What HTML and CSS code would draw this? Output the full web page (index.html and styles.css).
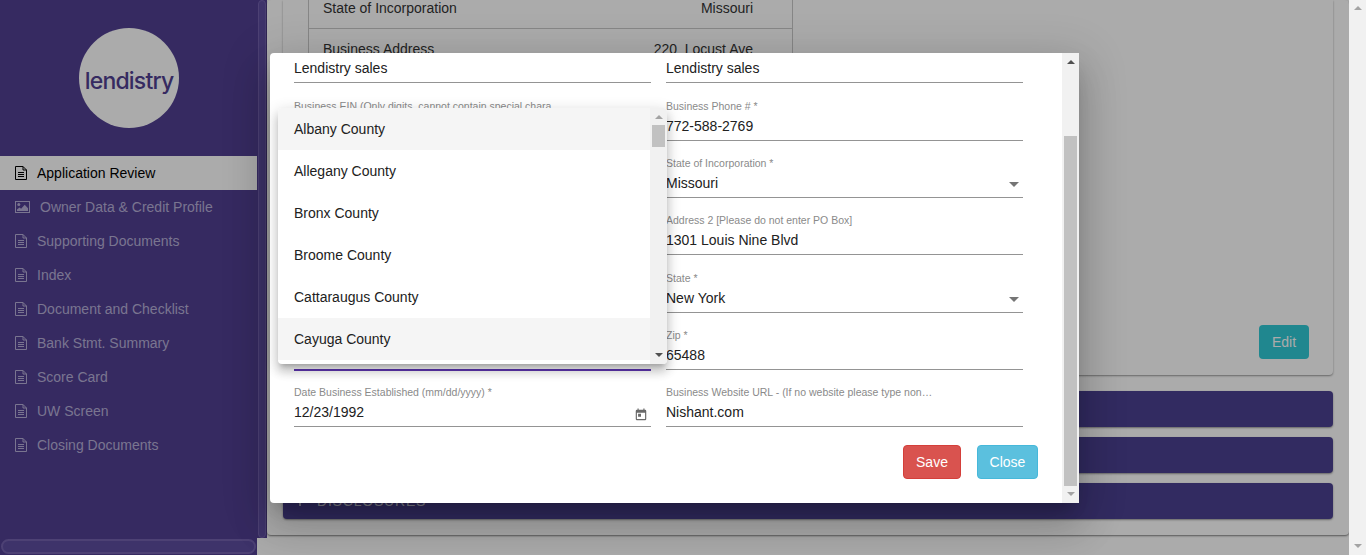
FILE: index.html
```html
<!DOCTYPE html>
<html lang="en">
<head>
  <meta charset="UTF-8" />
  <title>Application Review</title>
  <link rel="stylesheet" href="styles.css">
</head>
<body>
  <svg class="icon-defs" width="0" height="0">
    <symbol id="doc" viewBox="0 0 12 14">
      <path d="M.5.5h7.5l3.5 3.5v9.5H.5z M8 .5V4h3.5" fill="none" stroke="currentColor" />
      <path d="M3 6.5h6M3 8.5h6M3 10.5h6" fill="none" stroke="currentColor" />
    </symbol>
    <symbol id="pic" viewBox="0 0 15 12">
      <path fill="currentColor" fill-rule="evenodd" d="M0 0h15v12H0z M1 1v10h13V1z" />
      <circle cx="3.8" cy="3.6" r="1.5" fill="currentColor" />
      <path fill="currentColor" d="M2 10V8.4l2.5-2 1.6 1.4 3.6-4 3.3 3.4V10z" />
    </symbol>
  </svg>

  <div class="page">
    <aside class="sidebar">
      <div class="side-main">
        <div class="logo"><span class="logo-text">lendistry</span></div>
        <nav class="nav">
          <a class="nav-item active"><svg class="nav-icon"><use href="#doc" /></svg>Application Review</a>
          <a class="nav-item wide"><svg class="nav-icon pic"><use href="#pic" /></svg>Owner Data &amp; Credit Profile</a>
          <a class="nav-item"><svg class="nav-icon"><use href="#doc" /></svg>Supporting Documents</a>
          <a class="nav-item"><svg class="nav-icon"><use href="#doc" /></svg>Index</a>
          <a class="nav-item"><svg class="nav-icon"><use href="#doc" /></svg>Document and Checklist</a>
          <a class="nav-item"><svg class="nav-icon"><use href="#doc" /></svg>Bank Stmt. Summary</a>
          <a class="nav-item"><svg class="nav-icon"><use href="#doc" /></svg>Score Card</a>
          <a class="nav-item"><svg class="nav-icon"><use href="#doc" /></svg>UW Screen</a>
          <a class="nav-item"><svg class="nav-icon"><use href="#doc" /></svg>Closing Documents</a>
        </nav>
      </div>
      <div class="side-vbar"><div class="side-vthumb"></div></div>
      <div class="side-hbar"><div class="side-hthumb"></div></div>
    </aside>

    <main class="main">
      <div class="panel">
        <section class="card">
          <div class="info-table">
            <div class="info-row first"><span>State of Incorporation</span><span>Missouri</span></div>
            <div class="info-row"><span>Business Address</span><span>220&nbsp; Locust Ave</span></div>
          </div>
          <button class="btn-edit" type="button">Edit</button>
        </section>
        <div class="bar"></div>
        <div class="bar"></div>
        <div class="bar"><svg class="bar-icon" viewBox="0 0 12 12"><path d="M5 0h2v5h5v2H7v5H5V7H0V5h5z" fill="currentColor" /></svg>DISCLOSURES</div>
      </div>
    </main>

    <div class="win-scroll"><i class="arrow up faded"></i><i class="arrow down faded"></i></div>
  </div>

  <div class="overlay"></div>

  <div class="modal">
    <div class="modal-content">
      <div class="form-area">
        <form class="form-grid">
          <div class="field"><div class="value">Lendistry sales</div></div>
          <div class="field"><div class="value">Lendistry sales</div></div>

          <div class="field"><label>Business EIN (Only digits, cannot contain special chara</label><div class="value"></div></div>
          <div class="field"><label>Business Phone # *</label><div class="value">772-588-2769</div></div>

          <div class="field"><div class="value"></div></div>
          <div class="field select"><label>State of Incorporation *</label><div class="value">Missouri</div></div>

          <div class="field"><div class="value"></div></div>
          <div class="field"><label>Address 2 [Please do not enter PO Box]</label><div class="value">1301 Louis Nine Blvd</div></div>

          <div class="field"><div class="value"></div></div>
          <div class="field select"><label>State *</label><div class="value">New York</div></div>

          <div class="field focused"><div class="value"></div></div>
          <div class="field"><label>Zip *</label><div class="value">65488</div></div>

          <div class="field date">
            <label>Date Business Established (mm/dd/yyyy) *</label>
            <div class="value">12/23/1992</div>
            <svg class="cal-icon" viewBox="0 0 24 24"><path fill="currentColor" d="M19 3h-1V1h-2v2H8V1H6v2H5a2 2 0 0 0-2 2v14a2 2 0 0 0 2 2h14a2 2 0 0 0 2-2V5a2 2 0 0 0-2-2zm0 16H5V8h14zM7 10h5v5H7z" /></svg>
          </div>
          <div class="field"><label>Business Website URL - (If no website please type non…</label><div class="value">Nishant.com</div></div>
        </form>
      </div>
      <div class="modal-footer">
        <button class="btn btn-save" type="button">Save</button>
        <button class="btn btn-close" type="button">Close</button>
      </div>
    </div>
    <div class="modal-scroll">
      <i class="arrow up"></i>
      <div class="modal-thumb"></div>
      <i class="arrow down faded"></i>
    </div>
  </div>

  <div class="menu">
    <ul class="menu-list">
      <li class="hover">Albany County</li>
      <li>Allegany County</li>
      <li>Bronx County</li>
      <li>Broome County</li>
      <li>Cattaraugus County</li>
      <li class="hover">Cayuga County</li>
    </ul>
    <div class="menu-scroll">
      <i class="arrow up faded"></i>
      <div class="menu-thumb"></div>
      <i class="arrow down"></i>
    </div>
  </div>
</body>
</html>
```

FILE: styles.css
```css
* { box-sizing: border-box; }
html, body { margin: 0; height: 100%; overflow: hidden; }
body { font-family: "Liberation Sans", Arial, sans-serif; font-size: 14px; color: #333; background: #fff; }
.icon-defs { position: absolute; }

.page { display: flex; height: 555px; }

/* sidebar */
.sidebar { width: 267px; flex: none; display: grid; grid-template-columns: 257px 10px; grid-template-rows: 538px 17px; }
.side-main { background: #513f91; overflow: hidden; }
.logo { width: 100px; height: 100px; margin: 28px 0 0 79px; padding-top: 6px; border-radius: 50%; background: #fff; display: flex; align-items: center; justify-content: center; }
.logo-text { font-family: Inter, sans-serif; font-weight: 500; font-size: 23px; letter-spacing: -.8px; color: #513f91; }
.nav { margin-top: 28px; }
.nav-item { display: flex; align-items: center; height: 34px; padding-left: 15px; color: #b6afd7; white-space: nowrap; }
.nav-item.active { background: #fff; color: #000; }
.nav-icon { width: 12px; height: 14px; margin-right: 10px; flex: none; }
.nav-icon.pic { width: 15px; height: 12px; }
.side-vbar { background: #513f91; padding: 0 1px; }
.side-vthumb { height: 100%; background: #5d4c9f; border: 1px solid #7362ae; border-radius: 6px; }
.side-hbar { background: #513f91; padding: 1px; }
.side-hthumb { height: 100%; background: #5d4c9f; border: 2px solid #7362ae; border-radius: 8px; }

/* page behind the dialog */
.main { flex: 1; height: 555px; padding-bottom: 20px; }
.panel { height: 100%; padding: 0 16px 16px; display: flex; flex-direction: column; gap: 10px; border-radius: 4px; box-shadow: 0 1px 2px rgba(0, 0, 0, .5); }
.card { flex: 1; position: relative; margin-bottom: 6px; border-radius: 0 0 4px 4px; box-shadow: 0 1px 2px rgba(0, 0, 0, .4); padding-left: 25px; }
.info-table { width: 485px; border: 1px solid #c8c8c8; border-top: 0; }
.info-row { display: flex; justify-content: space-between; padding: 12px 39px 11px 14px; line-height: 16px; border-bottom: 1px solid #c8c8c8; }
.info-row.first { padding: 0 39px 12px 14px; }
.btn-edit { position: absolute; right: 24px; bottom: 16px; width: 50px; height: 34px; border: 0; border-radius: 4px; background: #30c9d5; color: #fff; font: inherit; }
.bar { height: 36px; flex: none; border-radius: 4px; background: #4b4191; color: #c9c9d9; box-shadow: 0 1px 2px rgba(0, 0, 0, .4); display: flex; align-items: center; padding-left: 12px; letter-spacing: .8px; }
.bar-icon { width: 10px; height: 10px; margin-right: 12px; }

.win-scroll { width: 17px; flex: none; background: #f1f1f1; display: flex; flex-direction: column; justify-content: space-between; align-items: center; padding: 6px 0 7px; }

/* scrollbar arrows */
.arrow { display: block; width: 0; height: 0; border-left: 4px solid transparent; border-right: 4px solid transparent; }
.arrow.up { border-bottom: 4px solid #505050; }
.arrow.down { border-top: 4px solid #505050; }
.arrow.up.faded { border-bottom-color: #a3a3a3; }
.arrow.down.faded { border-top-color: #a3a3a3; }

.overlay { position: absolute; top: 0; left: 0; width: 1349px; height: 555px; background: rgba(0, 0, 0, .33); }

/* dialog */
.modal { position: absolute; left: 270px; top: 53px; width: 809px; height: 450px; display: flex; background: #fff; border-radius: 4px 0 0 4px; box-shadow: 0 11px 15px -7px rgba(0, 0, 0, .2), 0 24px 38px 3px rgba(0, 0, 0, .14), 0 9px 46px 8px rgba(0, 0, 0, .12); }
.modal-content { flex: 1; display: flex; flex-direction: column; min-width: 0; }
.form-area { height: 374px; padding: 0 39px 0 24px; overflow: hidden; display: flex; flex-direction: column; justify-content: flex-end; }
.form-grid { display: grid; grid-template-columns: 357px 357px; grid-template-rows: 30px 58px 57px 57px 58px 57px 57px; column-gap: 15px; flex: none; }
.field { position: relative; display: flex; flex-direction: column; justify-content: flex-end; }
.field label { display: block; height: 12px; margin-bottom: 6px; font-size: 10.5px; line-height: 12px; color: #8a8a8a; white-space: nowrap; }
.value { height: 23px; padding-bottom: 6px; line-height: 16px; color: #212121; border-bottom: 1px solid #949494; }
.field.focused .value { height: 24px; margin-bottom: -1px; border-bottom: 2px solid #5e35b1; }
.field.select::after { content: ""; position: absolute; right: 4px; bottom: 11px; border-left: 5px solid transparent; border-right: 5px solid transparent; border-top: 5px solid #757575; }
.cal-icon { position: absolute; right: 3px; bottom: 5px; width: 14px; height: 14px; color: #6a6a6a; }

.modal-footer { display: flex; justify-content: flex-end; gap: 16px; padding: 18px 24px 0 0; }
.btn { height: 34px; padding: 0; border: 1px solid; border-radius: 4px; color: #fff; font: inherit; }
.btn-save { width: 58px; background: #d9534f; border-color: #d43f3a; }
.btn-close { width: 61px; background: #5bc0de; border-color: #46b8da; }

.modal-scroll { width: 17px; flex: none; background: #f1f1f1; display: flex; flex-direction: column; align-items: center; padding-top: 7px; }
.modal-thumb { width: 13px; height: 350px; margin: 72px 0 6px; background: #c1c1c1; }

/* county dropdown */
.menu { position: absolute; left: 278px; top: 108px; width: 389px; height: 256px; display: flex; background: #fff; border-radius: 4px; overflow: hidden; box-shadow: 0 5px 5px -3px rgba(0, 0, 0, .2), 0 8px 10px 1px rgba(0, 0, 0, .14), 0 3px 14px 2px rgba(0, 0, 0, .12); }
.menu-list { flex: 1; margin: 0; padding: 0; list-style: none; }
.menu-list li { height: 42px; padding-left: 16px; line-height: 42px; color: #212121; }
.menu-list li.hover { background: #f5f5f5; }
.menu-scroll { width: 17px; flex: none; background: #f1f1f1; display: flex; flex-direction: column; align-items: center; padding-top: 7px; }
.menu-thumb { width: 13px; height: 22px; margin: 6px 0 206px; background: #c1c1c1; }
```
